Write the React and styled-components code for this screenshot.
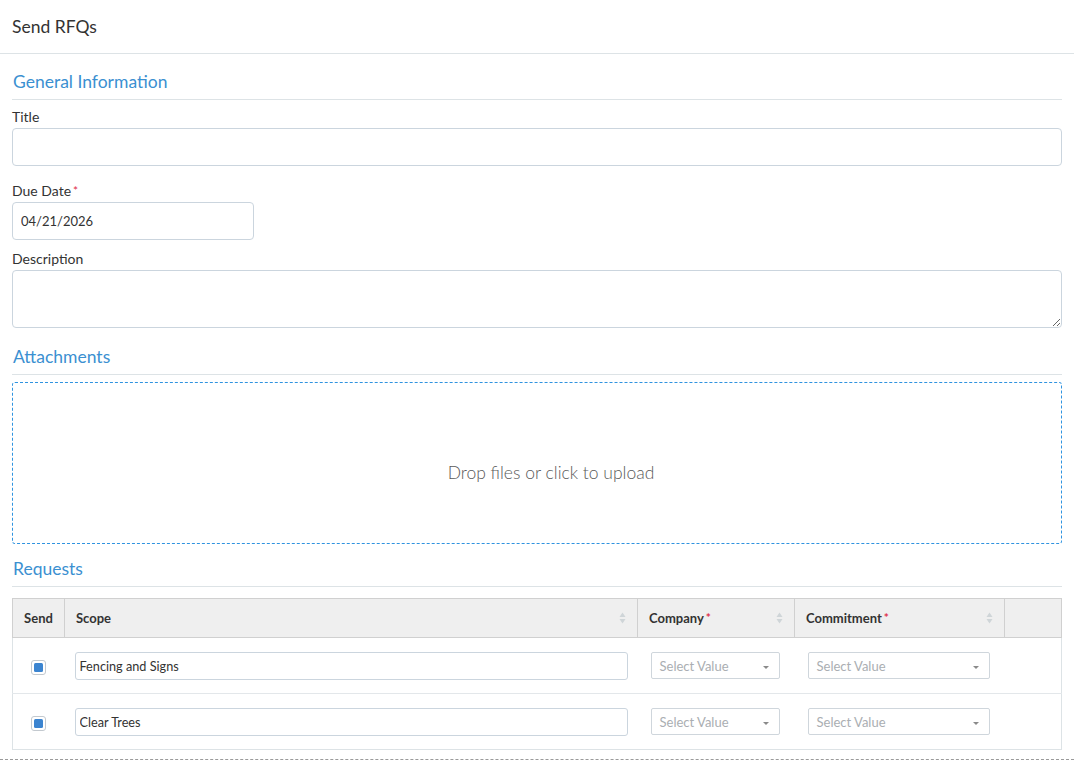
import React from "react";
import styled, { createGlobalStyle } from "styled-components";

const GlobalStyle = createGlobalStyle`
    html, body {
        margin: 0;
        padding: 0;
        background: #fff;
    }
    body {
        font-family: Lato, "Open Sans", Arial, sans-serif;
        color: #333;
    }
`;

const rows = [
    { id: 1, scope: "Fencing and Signs" },
    { id: 2, scope: "Clear Trees" },
];

const SortIcon = () => (
    <svg width="7" height="12" viewBox="0 0 7 12">
        <path d="M3.5 0.5 L6.5 5 H0.5 Z" fill="#cfd5d8" />
        <path d="M3.5 11.5 L6.5 7 H0.5 Z" fill="#cfd5d8" />
    </svg>
);

const Caret = () => (
    <svg width="6" height="3" viewBox="0 0 6 3">
        <path d="M0 0 H6 L3 3 Z" fill="#8a8a8a" />
    </svg>
);

const App = () => {
    return (
        <Page>
            <GlobalStyle />
            <TopBar>
                <PageTitle>Send RFQs</PageTitle>
            </TopBar>
            <Content>
                <SectionTitle gap="8px">General Information</SectionTitle>
                <Field>
                    <Label>Title</Label>
                    <TextInput type="text" />
                </Field>
                <Field top="16px">
                    <Label>
                        Due Date<Req>*</Req>
                    </Label>
                    <TextInput type="text" defaultValue="04/21/2026" width="242px" />
                </Field>
                <Field top="10px">
                    <Label>Description</Label>
                    <TextArea />
                </Field>

                <SectionTitle top="18px">Attachments</SectionTitle>
                <DropZone>Drop files or click to upload</DropZone>

                <SectionTitle top="14px" gap="11px">Requests</SectionTitle>
                <Table>
                    <colgroup>
                        <col style={{ width: 52 }} />
                        <col style={{ width: 573 }} />
                        <col style={{ width: 157 }} />
                        <col style={{ width: 210 }} />
                        <col />
                    </colgroup>
                    <thead>
                        <tr>
                            <Th center>Send</Th>
                            <Th>
                                <HeadInner>
                                    Scope
                                    <SortIcon />
                                </HeadInner>
                            </Th>
                            <Th>
                                <HeadInner>
                                    <span>
                                        Company<Req>*</Req>
                                    </span>
                                    <SortIcon />
                                </HeadInner>
                            </Th>
                            <Th>
                                <HeadInner>
                                    <span>
                                        Commitment<Req>*</Req>
                                    </span>
                                    <SortIcon />
                                </HeadInner>
                            </Th>
                            <Th />
                        </tr>
                    </thead>
                    <tbody>
                        {rows.map((row) => (
                            <tr key={row.id}>
                                <Td center>
                                    <CheckBox>
                                        <CheckFill />
                                    </CheckBox>
                                </Td>
                                <Td>
                                    <CellInput type="text" defaultValue={row.scope} />
                                </Td>
                                <Td pad="13px">
                                    <Select width="129px">
                                        <span>Select Value</span>
                                        <Caret />
                                    </Select>
                                </Td>
                                <Td pad="13px">
                                    <Select width="182px">
                                        <span>Select Value</span>
                                        <Caret />
                                    </Select>
                                </Td>
                                <Td />
                            </tr>
                        ))}
                    </tbody>
                </Table>
            </Content>
            <BottomRule />
        </Page>
    );
};

export default App;

const Page = styled.div`
    width: 1074px;
    height: 760px;
    overflow: hidden;
`;

const TopBar = styled.div`
    height: 54px;
    border-bottom: 1px solid #dde3e6;
    display: flex;
    align-items: center;
    padding: 0 12px;
    box-sizing: border-box;
`;

const PageTitle = styled.div`
    font-size: 17.5px;
    color: #333;
`;

const Content = styled.div`
    padding: 0 12px;
`;

const SectionTitle = styled.div`
    font-size: 17.5px;
    color: #3b90d1;
    margin-top: ${(p) => p.top || "17px"};
    padding: 0 0 6px 1px;
    border-bottom: 1px solid #dde3e6;
    line-height: 22px;
    margin-bottom: ${(p) => p.gap || "7px"};
`;

const Field = styled.div`
    display: flex;
    flex-direction: column;
    margin-top: ${(p) => p.top || "0"};
`;

const Label = styled.label`
    font-size: 14px;
    line-height: 17px;
    margin-bottom: 3px;
    color: #333;
`;

const Req = styled.span`
    color: #e0304a;
    margin-left: 2px;
    font-size: 12px;
    vertical-align: top;
`;

const TextInput = styled.input`
    width: ${(p) => p.width || "100%"};
    height: 38px;
    box-sizing: border-box;
    border: 1px solid #cbd5de;
    border-radius: 4px;
    padding: 0 8px;
    font-family: Lato, Arial, sans-serif;
    font-size: 13px;
    color: #333;
    outline: none;
`;

const TextArea = styled.textarea`
    width: 100%;
    height: 58px;
    box-sizing: border-box;
    border: 1px solid #cbd5de;
    border-radius: 4px;
    padding: 6px 8px;
    font-family: Lato, Arial, sans-serif;
    font-size: 13px;
    display: block;
    resize: vertical;
`;

const DropZone = styled.div`
    height: 162px;
    box-sizing: border-box;
    border: 1px dashed #2f93e0;
    border-radius: 3px;
    display: flex;
    align-items: center;
    justify-content: center;
    font-size: 17.5px;
    font-weight: 300;
    color: #5a5a5a;
    padding: 18px 0 0 28px;
`;

const Table = styled.table`
    width: 100%;
    border-collapse: collapse;
    table-layout: fixed;
    border: 1px solid #dde3e6;
`;

const Th = styled.th`
    height: 39px;
    box-sizing: border-box;
    background: #efefef;
    border: 1px solid #d0d0d0;
    font-size: 13px;
    font-weight: 700;
    color: #333;
    text-align: ${(p) => (p.center ? "center" : "left")};
    padding: 0 11px;
`;

const HeadInner = styled.div`
    display: flex;
    align-items: center;
    justify-content: space-between;
`;

const Td = styled.td`
    height: 56px;
    box-sizing: border-box;
    border-top: 1px solid #e3e7ea;
    padding: 0 10px 0 ${(p) => p.pad || "10px"};
    text-align: ${(p) => (p.center ? "center" : "left")};
    vertical-align: middle;
`;

const CheckBox = styled.span`
    display: inline-flex;
    align-items: center;
    justify-content: center;
    width: 15px;
    height: 15px;
    box-sizing: border-box;
    border: 1px solid #c3c9cf;
    border-radius: 3px;
    background: #fff;
    vertical-align: middle;
`;

const CheckFill = styled.span`
    width: 9px;
    height: 9px;
    border-radius: 1.5px;
    background: #3b84d0;
`;

const CellInput = styled.input`
    width: 100%;
    height: 28px;
    box-sizing: border-box;
    border: 1px solid #cbd5de;
    border-radius: 3px;
    padding: 0 4px;
    font-family: Lato, Arial, sans-serif;
    font-size: 12.7px;
    color: #333;
    outline: none;
`;

const Select = styled.div`
    width: ${(p) => p.width};
    height: 27px;
    box-sizing: border-box;
    border: 1px solid #cfd6dc;
    border-radius: 2px;
    display: flex;
    align-items: center;
    justify-content: space-between;
    padding: 0 10px 0 8px;
    font-size: 13px;
    color: #aaaeb2;
    svg {
        margin-top: 4px;
    }
`;

const BottomRule = styled.div`
    margin-top: 9px;
    border-top: 1px dashed #9a9a9a;
`;
